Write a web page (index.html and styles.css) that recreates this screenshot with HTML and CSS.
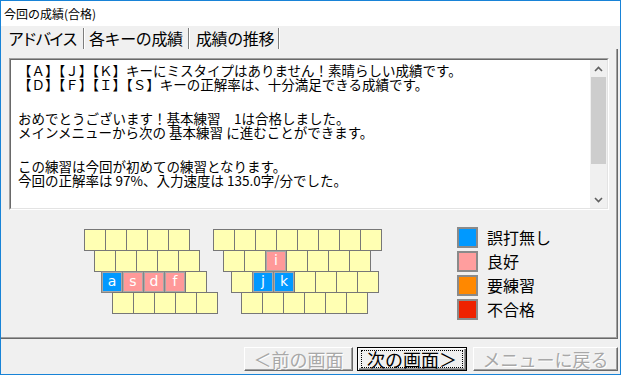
FILE: index.html
```html
<!DOCTYPE html>
<html lang="ja">
<head>
    <link rel="stylesheet" href="styles.css">
    <meta charset="UTF-8">
    <title>今回の成績(合格)</title>
</head>
<body>
<div class="window">
    <div class="titlebar">今回の成績(合格)</div>

    <div class="tabs">
        <div class="tab tab-advice">アドバイス</div>
        <div class="tab tab-keys">各キーの成績</div>
        <div class="tab tab-trend">成績の推移</div>
    </div>

    <div class="panel">
        <div class="memo">
            <div class="memo-inner">
                <div class="memo-text">
                    <p>【Ａ】【Ｊ】【Ｋ】キーにミスタイプはありません！素晴らしい成績です。<br>【Ｄ】【Ｆ】【Ｉ】【Ｓ】キーの正解率は、十分満足できる成績です。</p>
                    <p>おめでとうございます！基本練習　1は合格しました。<br>メインメニューから次の 基本練習 に進むことができます。</p>
                    <p>この練習は今回が初めての練習となります。<br>今回の正解率は 97%、入力速度は 135.0字/分でした。</p>
                </div>
                <div class="scrollbar">
                    <div class="sb-btn">
                        <svg width="9" height="6" viewBox="0 0 9 6"><path d="M1 5 L4.5 1.5 L8 5" fill="none" stroke="#606060" stroke-width="1.6"/></svg>
                    </div>
                    <div class="sb-track"><div class="sb-thumb"></div></div>
                    <div class="sb-btn">
                        <svg width="9" height="6" viewBox="0 0 9 6"><path d="M1 1 L4.5 4.5 L8 1" fill="none" stroke="#606060" stroke-width="1.6"/></svg>
                    </div>
                </div>
            </div>
        </div>

        <div class="lower">
            <div class="keyboard">
                <div class="kb-row row1">
                    <span class="key"></span><span class="key"></span><span class="key"></span><span class="key"></span><span class="key"></span>
                    <span class="key gap"></span><span class="key"></span><span class="key"></span><span class="key"></span><span class="key"></span><span class="key"></span><span class="key"></span><span class="key"></span>
                </div>
                <div class="kb-row row2">
                    <span class="key"></span><span class="key"></span><span class="key"></span><span class="key"></span><span class="key"></span>
                    <span class="key gap"></span><span class="key"></span><span class="key good">i</span><span class="key"></span><span class="key"></span><span class="key"></span><span class="key"></span>
                </div>
                <div class="kb-row row3">
                    <span class="key ok">a</span><span class="key good">s</span><span class="key good">d</span><span class="key good">f</span><span class="key"></span>
                    <span class="key gap wide"></span><span class="key ok">j</span><span class="key ok">k</span><span class="key"></span><span class="key"></span><span class="key"></span><span class="key"></span>
                </div>
                <div class="kb-row row4">
                    <span class="key"></span><span class="key"></span><span class="key"></span><span class="key"></span><span class="key"></span>
                    <span class="key gap"></span><span class="key"></span><span class="key"></span><span class="key"></span><span class="key"></span><span class="key"></span>
                </div>
            </div>

            <ul class="legend">
                <li><span class="swatch sw-ok"></span>誤打無し</li>
                <li><span class="swatch sw-good"></span>良好</li>
                <li><span class="swatch sw-practice"></span>要練習</li>
                <li><span class="swatch sw-fail"></span>不合格</li>
            </ul>
        </div>
    </div>

    <div class="buttons">
        <button class="btn btn-prev" disabled>＜前の画面</button>
        <button class="btn btn-next"><span class="focus">次の画面＞</span></button>
        <button class="btn btn-menu" disabled>メニューに戻る</button>
    </div>
</div>
</body>
</html>
```

FILE: styles.css
```css
body {
    margin: 0;
    font-family: "Noto Sans CJK JP", "Noto Sans", sans-serif;
    color: #000;
}

.window {
    width: 621px;
    height: 375px;
    box-sizing: border-box;
    border: 1px solid #1883d7;
    background: #f0f0f0;
}

.titlebar {
    height: 25px;
    line-height: 25px;
    padding-left: 3px;
    font-size: 12px;
    background: #fff;
}

/* tab strip */
.tabs {
    display: flex;
    height: 23px;
}

.tab {
    height: 21px;
    margin-top: 2px;
    line-height: 21px;
    font-size: 16px;
    letter-spacing: -0.4px;
    box-sizing: border-box;
    border-right: 1px solid #7d7d7d;
    box-shadow: 1px 0 0 #fff;
    white-space: nowrap;
}

.tab-advice {
    width: 83px;
    padding-left: 7px;
    letter-spacing: -2.4px;
}

.tab-keys {
    width: 105px;
    padding-left: 5px;
}

.tab-trend {
    width: 90px;
    padding-left: 7px;
}

.panel {
    width: 617px;
    height: 290px;
    box-sizing: border-box;
    border-right: 1px solid #696969;
    border-bottom: 1px solid #696969;
    box-shadow: inset -1px -1px 0 #a0a0a0;
    overflow: hidden;
}

/* advice memo */
.memo {
    width: 600px;
    height: 152px;
    margin: 9px 0 0 8px;
    box-sizing: border-box;
    border: 1px solid;
    border-color: #a0a0a0 #fff #fff #a0a0a0;
}

.memo-inner {
    display: flex;
    height: 100%;
    box-sizing: border-box;
    border: 1px solid;
    border-color: #696969 #e3e3e3 #e3e3e3 #696969;
    background: #fff;
}

.memo-text {
    flex: 1;
    padding: 3px 7px;
    font-size: 13.5px;
    line-height: 14px;
    white-space: nowrap;
    overflow: hidden;
}

.memo-text p {
    margin: 0 0 20px;
}

.scrollbar {
    width: 17px;
    display: flex;
    flex-direction: column;
    background: #f0f0f0;
}

.sb-btn {
    height: 17px;
    display: flex;
    align-items: center;
    justify-content: center;
}

.sb-track {
    flex: 1;
    padding: 0 1px;
}

.sb-thumb {
    height: 87px;
    background: #cdcdcd;
}

/* keyboard + legend */
.lower {
    display: flex;
    align-items: flex-start;
    margin-top: 17px;
    padding-left: 83px;
}

.keyboard {
    width: 298px;
    flex-shrink: 0;
    margin-top: 2px;
}

.kb-row {
    display: flex;
    height: 21px;
}

.row2 { padding-left: 10px; }
.row3 { padding-left: 17px; }
.row4 { padding-left: 28px; }

.key {
    width: 22px;
    height: 22px;
    flex-shrink: 0;
    box-sizing: border-box;
    margin-right: -1px;
    border: 1px solid #777;
    background: #ffffb3;
    color: #fff;
    font-family: "DejaVu Sans", sans-serif;
    font-size: 14px;
    line-height: 19px;
    text-align: center;
}

.key.gap { margin-left: 24px; }
.key.wide { margin-left: 25px; }

.key.ok {
    background: #0099ff;
    border-color: #858585;
    box-shadow: inset 0 0 0 1px #a8a8a8;
}

.key.good {
    background: #ff9999;
    border-color: #858585;
    box-shadow: inset 0 0 0 1px #a8a8a8;
}

.legend {
    list-style: none;
    margin: 0 0 0 75px;
    padding: 0;
}

.legend li {
    display: flex;
    align-items: flex-start;
    height: 24px;
    font-size: 16px;
    line-height: 21px;
}

.swatch {
    width: 21px;
    height: 21px;
    margin-right: 9px;
    box-sizing: border-box;
    border: 2px solid #8a8a8a;
}

.sw-ok { background: #0099ff; }
.sw-good { background: #ff9e9e; }
.sw-practice { background: #ff8800; }
.sw-fail { background: #ee2200; }

/* bottom buttons */
.buttons {
    display: flex;
    justify-content: flex-end;
    padding: 8px 2px 0 0;
}

.btn {
    height: 24px;
    padding: 0;
    box-sizing: border-box;
    font-family: "Noto Sans CJK JP", sans-serif;
    font-size: 18px;
    line-height: 20px;
    background: #f0f0f0;
    border: 1px solid;
    border-color: #fff #696969 #696969 #fff;
    box-shadow: inset -1px -1px 0 #a0a0a0;
    color: #000;
    white-space: nowrap;
}

.btn:disabled {
    color: #a8a8a8;
    text-shadow: 1px 1px 0 #fff;
}

.btn-prev { width: 109px; }

.btn-next {
    width: 110px;
    margin-left: 4px;
    border-color: #000;
    box-shadow: inset 1px 1px 0 #fff, inset -1px -1px 0 #696969, inset -2px -2px 0 #a0a0a0;
}

.btn-next .focus {
    display: block;
    margin: 0 3px;
    height: 16px;
    line-height: 16px;
    border: 1px dotted #000;
}

.btn-menu {
    width: 145px;
    margin-left: 6px;
}
```
